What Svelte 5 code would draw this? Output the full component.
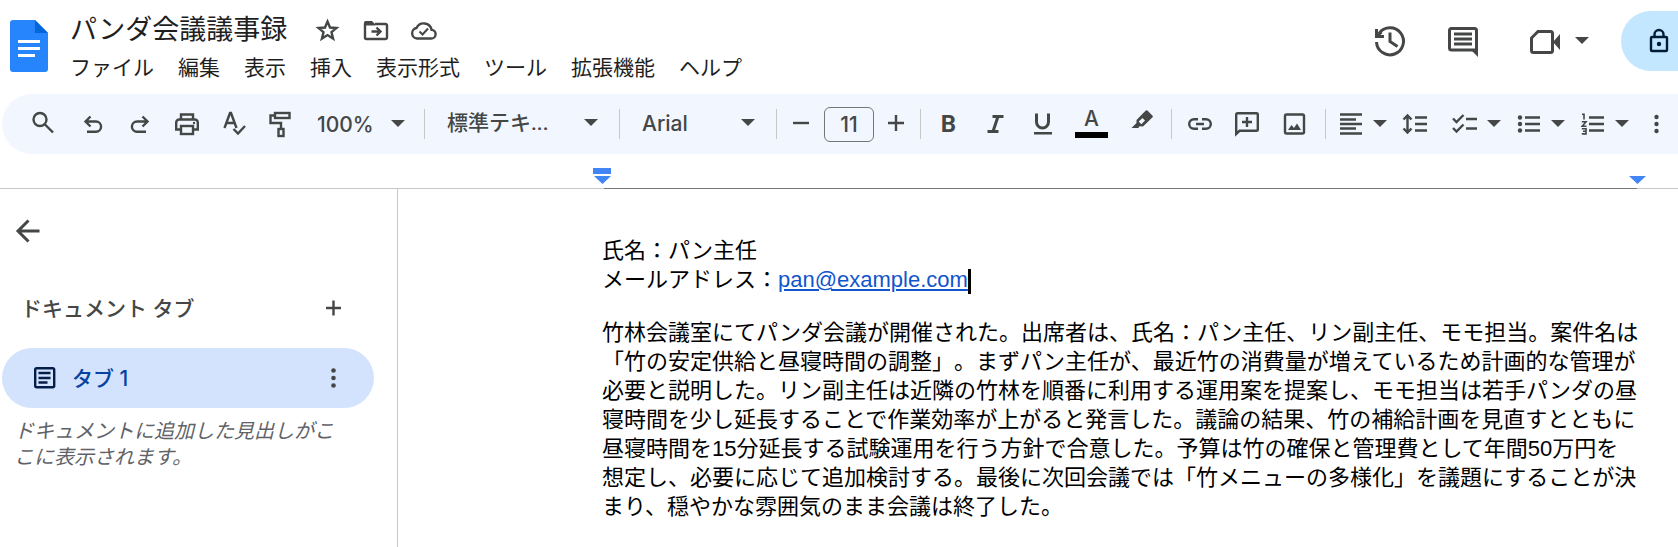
<script>
  let title = 'パンダ会議議事録';
  let fontSize = '11';
  let zoom = '100%';
  let style = '標準テキ...';
  let font = 'Arial';

  const menus = ['ファイル', '編集', '表示', '挿入', '表示形式', 'ツール', '拡張機能', 'ヘルプ'];
  const zooms = ['50%', '75%', '100%', '125%', '150%'];
  const styles = ['標準テキ...', 'タイトル', '見出し 1', '見出し 2'];
  const fonts = ['Arial', 'Roboto', 'Georgia'];

  const email = 'pan@example.com';
  const minutes =
    '竹林会議室にてパンダ会議が開催された。出席者は、氏名：パン主任、リン副主任、モモ担当。案件名は' +
    '「竹の安定供給と昼寝時間の調整」。まずパン主任が、最近竹の消費量が増えているため計画的な管理が' +
    '必要と説明した。リン副主任は近隣の竹林を順番に利用する運用案を提案し、モモ担当は若手パンダの昼' +
    '寝時間を少し延長することで作業効率が上がると発言した。議論の結果、竹の補給計画を見直すとともに' +
    '昼寝時間を15分延長する試験運用を行う方針で合意した。予算は竹の確保と管理費として年間50万円を' +
    '想定し、必要に応じて追加検討する。最後に次回会議では「竹メニューの多様化」を議題にすることが決' +
    'まり、穏やかな雰囲気のまま会議は終了した。';

  function step(n) {
    fontSize = String(Math.max(1, Number(fontSize) + n));
  }
</script>

{#snippet caret()}
  <svg class="caret" viewBox="0 0 14 8" aria-hidden="true"><path d="M0 0h14L7 7z" /></svg>
{/snippet}

<div class="app">
  <header>
    <svg class="logo" viewBox="0 0 38 52" role="img" aria-label="ドキュメント">
      <path fill="#2684fc" d="M3 0h22l13 13v36a3 3 0 0 1-3 3H3a3 3 0 0 1-3-3V3a3 3 0 0 1 3-3z" />
      <path fill="#0066da" d="M25 0l13 13H25z" />
      <path fill="#fff" d="M8 20h22v3H8zM8 27h22v3H8zM8 34h17v3H8z" />
    </svg>

    <div class="heading">
      <div class="title-row">
        <h1>{title}</h1>
        <div class="title-icons">
          <button aria-label="スター">
            <svg class="ic" viewBox="0 0 27 28"><path class="ln" d="M13.5 5.5l2.500 6 6.500.5-5 4.200 1.600 6.400-5.600-3.500-5.600 3.500 1.600-6.400-5-4.200 6.500-.5z" /></svg>
          </button>
          <button aria-label="移動">
            <svg class="ic" viewBox="0 0 27 28">
              <path class="ln" d="M3 7.500v14a1.500 1.500 0 0 0 1.500 1.500h19a1.500 1.500 0 0 0 1.500-1.500v-12a1.500 1.500 0 0 0-1.500-1.500H13" />
              <path d="M2 9V6.500A1.500 1.500 0 0 1 3.500 5H10l3 3v1.500H2z" />
              <path class="ln" d="M9.500 15.500h8M14.500 11.500l4 4-4 4" />
            </svg>
          </button>
          <button aria-label="ドキュメントのステータス">
            <svg class="ic" viewBox="0 0 27 28">
              <path class="ln" d="M7 22.500h14a4.300 4.300 0 0 0 .6-8.600A8 8 0 0 0 6.500 12 5.300 5.300 0 0 0 7 22.500z" />
              <path class="ln thin" d="M9.500 15.500l3 3 5.500-6" />
            </svg>
          </button>
        </div>
      </div>
      <nav>
        {#each menus as m}
          <button>{m}</button>
        {/each}
      </nav>
    </div>

    <div class="actions">
      <button class="action" aria-label="変更履歴">
        <svg viewBox="0 0 36 36">
          <path class="ln thick" d="M4.500 19A13.500 13.500 0 1 0 7 10.500M18 9.500v9l7.500 5" />
          <path d="M3 6h3v4.500l2.500-2.500 2 2-2 2H12v3H3z" />
        </svg>
      </button>
      <button class="action" aria-label="コメント">
        <svg viewBox="0 0 36 36">
          <path class="ln thick" d="M31.500 31V7.500a2 2 0 0 0-2-2h-23a2 2 0 0 0-2 2V25a2 2 0 0 0 2 2h25" />
          <path d="M25 26h8v8zM9 9.500h18v3H9zM9 14.500h18v3H9zM9 19.500h18v3H9z" />
        </svg>
      </button>
      <button class="action meet" aria-label="会議に参加">
        <svg viewBox="0 0 36 36">
          <path class="ln thick" d="M4.500 15v12.500a2 2 0 0 0 2 2h17a2 2 0 0 0 2-2v-17a2 2 0 0 0-2-2H11z" />
          <path d="M33 11v16l-7-8z" />
        </svg>
        {@render caret()}
      </button>
      <button class="share" aria-label="共有">
        <svg viewBox="0 0 20 26">
          <rect class="ln" x="2" y="9" width="16" height="14" rx="1" />
          <path class="ln" d="M5.500 9V6.500a4.500 4.500 0 0 1 9 0V9" />
          <circle cx="10" cy="16" r="2.200" />
        </svg>
      </button>
    </div>
  </header>

  <div class="toolbar" role="toolbar">
    <button class="tb search" aria-label="検索">
      <svg class="ic" viewBox="0 0 27 28"><circle class="ln" cx="10" cy="9.500" r="6.500" /><path class="ln" d="M14.500 14l8.500 8.500" /></svg>
    </button>
    <button class="tb" aria-label="元に戻す">
      <svg class="ic" viewBox="0 0 27 28"><path class="ln" d="M7 11.500h10a5 5 0 0 1 0 10.200H8M11.500 6.500l-5 5 5 5" /></svg>
    </button>
    <button class="tb" aria-label="やり直し">
      <svg class="ic" viewBox="0 0 27 28"><path class="ln" d="M21 11.500H11a5 5 0 0 0 0 10.200h9M16.500 6.500l5 5-5 5" /></svg>
    </button>
    <button class="tb" aria-label="印刷">
      <svg class="ic" viewBox="0 0 27 28">
        <path class="ln" d="M8 9.500V4.500h12v5M8 19.500H3.200V12.500a3 3 0 0 1 3-3h15.600a3 3 0 0 1 3 3v7H20" />
        <rect class="ln" x="8" y="16" width="12" height="8" />
        <circle cx="21" cy="13" r="1.200" />
      </svg>
    </button>
    <button class="tb" aria-label="スペルチェック">
      <svg class="ic" viewBox="0 0 27 28">
        <path class="ln" d="M4.500 18l5.500-15h1l5.500 15M6.500 13h8M13.500 19l4.500 4.500 7-7.500" />
      </svg>
    </button>
    <button class="tb" aria-label="書式を貼り付け">
      <svg class="ic" viewBox="0 0 27 28">
        <rect class="ln" x="8" y="3" width="14.500" height="5" />
        <path class="ln" d="M8 5.500H3.500v7.500H14v6" />
        <rect class="ln" x="11.500" y="19" width="5" height="7" />
      </svg>
    </button>

    <label class="drop zoom">
      <select aria-label="ズーム" bind:value={zoom}>
        {#each zooms as z}<option>{z}</option>{/each}
      </select>
      {@render caret()}
    </label>
    <span class="sep"></span>
    <label class="drop para">
      <select aria-label="スタイル" bind:value={style}>
        {#each styles as s}<option>{s}</option>{/each}
      </select>
      {@render caret()}
    </label>
    <span class="sep"></span>
    <label class="drop font">
      <select aria-label="フォント" bind:value={font}>
        {#each fonts as f}<option>{f}</option>{/each}
      </select>
      {@render caret()}
    </label>
    <span class="sep"></span>

    <div class="stepper">
      <button aria-label="フォントサイズを縮小" onclick={() => step(-1)}>
        <svg class="ic" viewBox="0 0 27 28"><path class="ln" d="M5 13h16" /></svg>
      </button>
      <input aria-label="フォントサイズ" bind:value={fontSize} />
      <button aria-label="フォントサイズを拡大" onclick={() => step(1)}>
        <svg class="ic" viewBox="0 0 27 28"><path class="ln" d="M4 13h16M12 5v16" /></svg>
      </button>
    </div>
    <span class="sep"></span>

    <div class="group marks">
      <button class="tb bold" aria-label="太字">B</button>
      <button class="tb" aria-label="斜体">
        <svg class="ic" viewBox="0 0 27 28"><path class="ln thick" d="M10.500 6.500h11M5.500 21.500h11M16 6.500l-5 15" /></svg>
      </button>
      <button class="tb" aria-label="下線">
        <svg class="ic" viewBox="0 0 27 28"><path class="ln thick" d="M7.500 3.500v8.500a6 6 0 0 0 12 0V3.500" /><path d="M5 22h18v2.500H5z" /></svg>
      </button>
      <button class="tb wide color" aria-label="テキストの色"><span>A</span></button>
      <button class="tb wide" aria-label="ハイライトの色">
        <svg class="ic" viewBox="0 0 27 28">
          <path fill-rule="evenodd" d="M16.500 .8a1.500 1.500 0 0 1 2.200 0l4.600 4.600a1.500 1.500 0 0 1 0 2.200L14 16.500l-3.500-.2L9.300 18H2.500l5-5L7.500 10zM13.500 8l-3.800 3.600 2.600 2.600L16 10.500z" />
        </svg>
      </button>
    </div>
    <span class="sep"></span>

    <div class="group insert">
      <button class="tb" aria-label="リンクを挿入">
        <svg class="ic" viewBox="0 0 27 28"><path class="ln" d="M12 9.200H8a4.800 4.800 0 0 0 0 9.600h4M16 9.200h4a4.800 4.800 0 0 1 0 9.600h-4M10 14h8" /></svg>
      </button>
      <button class="tb" aria-label="コメントを追加">
        <svg class="ic" viewBox="0 0 27 28"><path class="ln" d="M3.200 24V4.500a1.300 1.300 0 0 1 1.300-1.300h19a1.300 1.300 0 0 1 1.300 1.300v15a1.300 1.300 0 0 1-1.300 1.300H6.500zM9 12h10M14 7v10" /></svg>
      </button>
      <button class="tb" aria-label="画像を挿入">
        <svg class="ic" viewBox="0 0 27 28"><rect class="ln" x="5" y="4.500" width="19" height="19" rx="1.500" /><path d="M8 20l3.500-5 2.500 3 3-4.500 4 6.500z" /></svg>
      </button>
    </div>
    <span class="sep"></span>

    <div class="lists">
      <button class="split" aria-label="配置">
        <svg class="ic" viewBox="0 0 27 28"><path class="ln" d="M3 4.500h22M3 9.500h16M3 14h22M3 18.500h16M3 23.500h22" /></svg>
        {@render caret()}
      </button>
      <button aria-label="行間隔">
        <svg class="ic" viewBox="0 0 27 28"><path class="ln" d="M14 7.500h12M14 14h12M14 20.500h12M6.500 6.500v15M2.500 9.500l4-4 4 4M2.500 18.500l4 4 4-4" /></svg>
      </button>
      <button class="split check" aria-label="チェックリスト">
        <svg class="ic" viewBox="0 0 27 28"><path class="ln" d="M15 9h11M15 18.500h11M2 8.500l3.500 3.500 7-7M2 18l3.500 3.500 7-7" /></svg>
        {@render caret()}
      </button>
      <button class="split" aria-label="箇条書き">
        <svg class="ic" viewBox="0 0 27 28"><path class="ln" d="M10 7.500h15M10 14h15M10 20.500h15" /><circle cx="5" cy="7.500" r="2.200" /><circle cx="5" cy="14" r="2.200" /><circle cx="5" cy="20.500" r="2.200" /></svg>
        {@render caret()}
      </button>
      <button class="split" aria-label="番号付きリスト">
        <svg class="ic" viewBox="0 0 27 28">
          <path class="ln" d="M10 7.500h15M10 14h15M10 20.500h15" />
          <path class="ln hair" d="M3 4.300h2V9.500M2.800 11.700H7L3.200 16.300H7.500M2.800 18.700H7v5.200H2.800M4 21.300h3" />
        </svg>
        {@render caret()}
      </button>
      <button aria-label="その他">
        <svg class="ic" viewBox="0 0 27 28"><circle cx="13.500" cy="7" r="2.200" /><circle cx="13.500" cy="14" r="2.200" /><circle cx="13.500" cy="21" r="2.200" /></svg>
      </button>
    </div>
  </div>

  <div class="ruler">
    <div class="outside left"></div>
    <div class="range">
      <svg class="marker start" viewBox="0 0 18 16"><path d="M0 0h18v6H0zM1 8h17l-8.500 8z" /></svg>
      <svg class="marker end" viewBox="0 0 18 16"><path d="M1 8h17l-8.500 8z" /></svg>
    </div>
    <div class="outside right"></div>
  </div>

  <div class="work">
    <aside>
      <button class="back" aria-label="閉じる">
        <svg class="ic" viewBox="0 0 27 28"><path class="ln thick" d="M25.500 14H4M14.500 3.500L4 14l10.500 10.500" /></svg>
      </button>
      <div class="tabs-head">
        <h2>ドキュメント タブ</h2>
        <button aria-label="タブを追加">
          <svg class="ic" viewBox="0 0 27 28"><path class="ln" d="M6 14h15M13.500 6.500v15" /></svg>
        </button>
      </div>
      <div class="tab">
        <button class="tab-name">
          <svg class="ic" viewBox="0 0 27 28"><rect class="ln" x="4.200" y="4.200" width="19" height="19" rx="1.500" /><path class="ln" d="M7.500 9h12M7.500 14h12M7.500 18.500h9" /></svg>
          <span>タブ 1</span>
        </button>
        <button class="tab-more" aria-label="タブのオプション">
          <svg class="ic" viewBox="0 0 27 28"><circle cx="13.500" cy="6.500" r="2.300" /><circle cx="13.500" cy="14" r="2.300" /><circle cx="13.500" cy="21.500" r="2.300" /></svg>
        </button>
      </div>
      <p class="hint">ドキュメントに追加した見出しがここに表示されます。</p>
    </aside>

    <main>
      <p>氏名：パン主任<br />メールアドレス：<a href="mailto:{email}">{email}</a><span class="cursor"></span></p>
      <p>{minutes}</p>
    </main>
  </div>
</div>

<style>
  :global(body) { margin: 0; background: #fff; }
  .app {
    min-height: 100vh; display: flex; flex-direction: column; overflow: hidden;
    font-family: Inter, 'Noto Sans CJK JP', sans-serif; font-size: 21px; color: #444746;
  }
  button { border: 0; padding: 0; margin: 0; background: none; font: inherit; color: inherit; cursor: pointer; display: flex; align-items: center; justify-content: center; flex: none; }
  svg { display: block; flex: none; fill: currentColor; }
  .ic { width: 27px; height: 28px; }
  .ln { fill: none; stroke: currentColor; stroke-width: 2.4; }
  .hair { stroke-width: 1.6; }
  .thin { stroke-width: 2; }
  .thick { stroke-width: 3; }
  .caret { width: 14px; height: 8px; }

  header { display: flex; height: 94px; }
  .logo { width: 38px; height: 52px; margin: 20px 22px 0 10px; }
  .heading { padding-top: 10px; }
  .title-row { display: flex; align-items: center; height: 40px; gap: 27px; }
  h1 { margin: 0; padding-bottom: 4px; font-family: 'Noto Sans CJK JP', sans-serif; font-size: 27px; font-weight: 400; line-height: 36px; color: #1f1f1f; white-space: nowrap; }
  .title-icons { display: flex; gap: 21px; }
  nav { display: flex; gap: 24px; height: 32px; color: #1f1f1f; font-family: 'Noto Sans CJK JP', sans-serif; }
  nav button { white-space: nowrap; }

  .actions { display: flex; margin-left: auto; padding-top: 11px; gap: 13px; height: 60px; }
  .action { width: 60px; }
  .action svg:first-child { width: 36px; height: 36px; }
  .meet { width: 96px; gap: 12px; margin-right: 6px; padding-left: 8px; }
  .share { width: 57px; background: #c2e7ff; color: #001d35; border-radius: 30px 0 0 30px; justify-content: flex-start; padding-left: 28px; }
  .share svg { width: 20px; height: 26px; }

  .toolbar { display: flex; align-items: center; height: 60px; margin-left: 2px; padding-left: 15px; background: #f2f6fe; border-radius: 30px 0 0 30px; font-weight: 500; }
  .tb { width: 47px; height: 60px; }
  .search { width: 52px; }
  .wide { width: 51px; }
  .sep { width: 1px; height: 30px; background: #c7c7c7; flex: none; }
  .drop { display: flex; align-items: center; height: 60px; box-sizing: border-box; padding: 0 21px 0 22px; flex: none; }
  .drop select { flex: 1; min-width: 0; appearance: none; border: 0; padding: 0; background: none; font: inherit; color: inherit; outline: none; }
  .zoom { width: 120px; padding: 0 19px 0 13px; }
  .para { width: 194px; padding-bottom: 2px; font-family: Roboto, 'Noto Sans CJK JP', sans-serif; }
  .font { width: 156px; padding-bottom: 2px; }
  .stepper { display: flex; align-items: center; gap: 1px; padding: 0 1px 0 2px; }
  .stepper button { width: 44px; height: 36px; }
  .stepper input { width: 50px; height: 35px; box-sizing: border-box; border: 1px solid #747775; border-radius: 6px; background: none; text-align: center; font: inherit; color: inherit; padding: 0; outline: none; }
  .group { display: flex; }
  .marks { padding: 0 3px 0 4px; }
  .insert { padding: 0 8px 0 4px; }
  .bold { font-family: Roboto, sans-serif; font-size: 24px; font-weight: 700; }
  .color span { width: 33px; height: 28px; line-height: 18px; border-bottom: 6px solid #000; box-sizing: border-box; }
  .lists { display: flex; align-items: center; gap: 14px; padding-left: 11px; }
  .split { gap: 9px; }
  .check { margin-left: 9px; }

  .ruler { display: flex; height: 35px; }
  .outside { border-bottom: 1px solid #c7c7c7; flex: none; }
  .left { width: 604px; }
  .right { width: 41px; }
  .range { flex: 1; border-bottom: 1px solid #747775; position: relative; }
  .marker { position: absolute; top: 14px; width: 18px; height: 16px; fill: #4285f4; }
  .start { left: -11px; }
  .end { right: -9px; }

  .work { display: flex; flex: 1; }
  aside { width: 374px; flex: none; padding: 24px 23px 0 0; border-right: 1px solid #c7c7c7; }
  .back { height: 36px; margin-left: 14px; }
  .tabs-head { display: flex; align-items: center; justify-content: space-between; height: 40px; margin: 39px 27px 20px 21px; }
  h2 { margin: 0; padding-bottom: 2px; font-size: 21px; font-weight: 500; }
  .tab { display: flex; align-items: center; justify-content: space-between; height: 60px; margin-left: 2px; padding: 0 27px 0 29px; border-radius: 30px; background: #d3e3fd; }
  .tab-name { gap: 14px; color: #0842a0; font-weight: 500; }
  .tab-name svg { color: #041e49; }
  .tab-name span { padding-bottom: 2px; }
  .hint { margin: 10px 30px 0 14px; font-size: 20px; line-height: 26px; font-style: italic; color: #5f6368; }

  main { flex: 1; padding: 47px 39px 0 204px; font-family: 'Liberation Sans', 'Noto Sans CJK JP', sans-serif; font-size: 22px; line-height: 29px; color: #000; text-spacing-trim: space-all; }
  main p { margin: 0 0 24px; }
  main p:last-child { margin-bottom: 0; }
  main a { color: #1155cc; }
  .cursor { display: inline-block; width: 3px; height: 25px; margin: -4px 0; background: #000; vertical-align: middle; }
</style>
